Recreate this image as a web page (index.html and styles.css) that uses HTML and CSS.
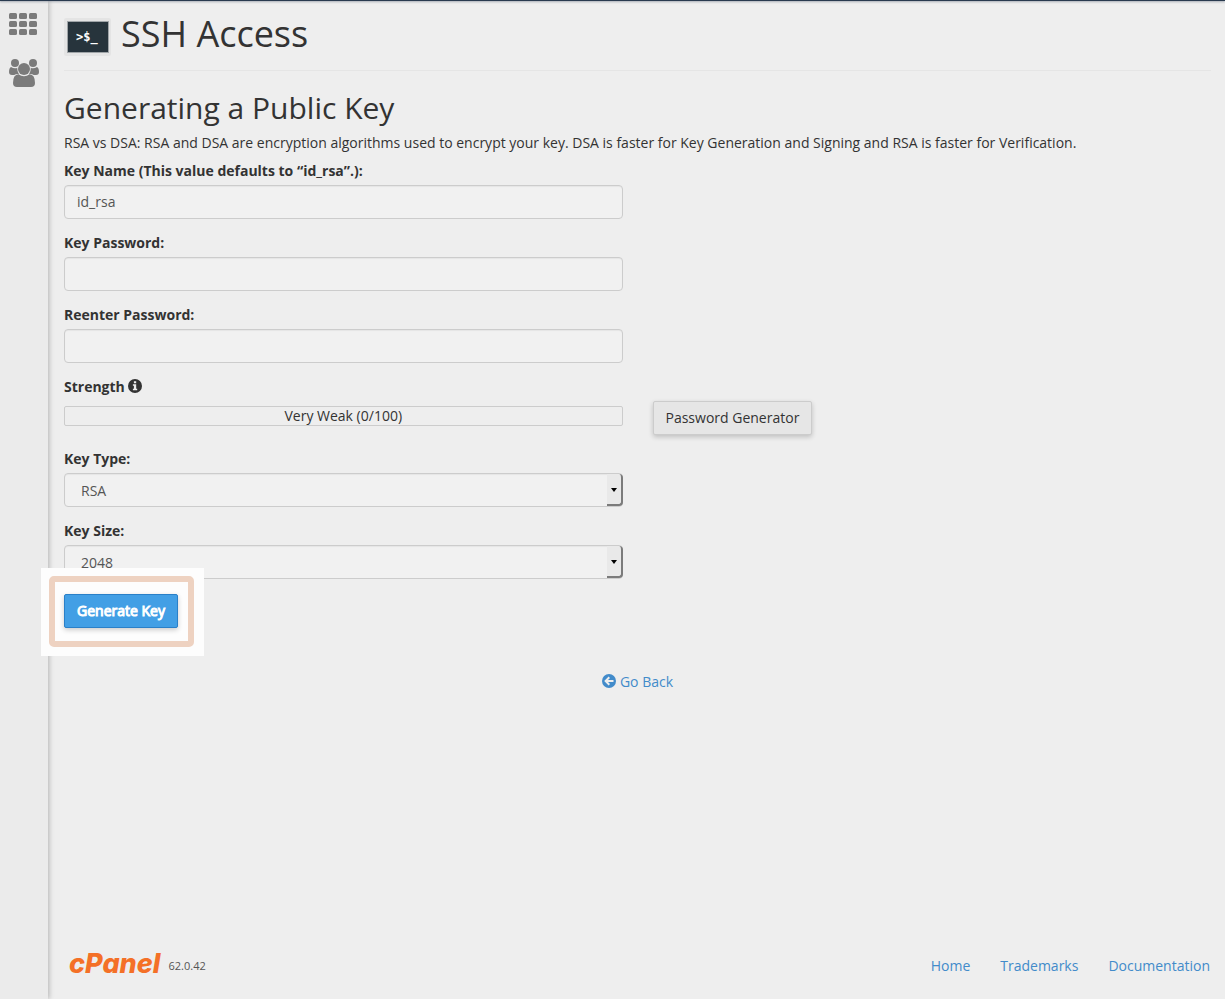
FILE: index.html
```html
<!DOCTYPE html>
<html lang="en">
<head>
<meta charset="utf-8">
<meta name="viewport" content="width=device-width, initial-scale=1">
<title>SSH Access</title>
<link rel="stylesheet" href="styles.css">
</head>
<body>
<div class="topbar"></div>
<div class="shell">
  <nav class="sidebar" aria-label="Main">
    <a class="side-link side-link-grid" href="#" aria-label="Home">
      <svg width="28" height="22" viewBox="0 0 28 22" fill="#7b7b7b">
        <rect x="0" y="0" width="8" height="6" rx="1.5"/><rect x="10" y="0" width="8" height="6" rx="1.5"/><rect x="20" y="0" width="8" height="6" rx="1.5"/>
        <rect x="0" y="8" width="8" height="6" rx="1.5"/><rect x="10" y="8" width="8" height="6" rx="1.5"/><rect x="20" y="8" width="8" height="6" rx="1.5"/>
        <rect x="0" y="16" width="8" height="6" rx="1.5"/><rect x="10" y="16" width="8" height="6" rx="1.5"/><rect x="20" y="16" width="8" height="6" rx="1.5"/>
      </svg>
    </a>
    <a class="side-link" href="#" aria-label="Users">
      <svg width="30" height="28" viewBox="0 0 30 28" fill="#7b7b7b">
        <circle cx="6" cy="4" r="4"/>
        <circle cx="24" cy="4" r="4"/>
        <path d="M2 8Q4 9.3 6 9.300Q7.500 9.300 8.200 8.800Q8 12.500 10 15.200Q7.500 14.300 5.300 16H3Q0 16 0 13Q0 9 2 8Z"/>
        <path d="M28 8Q26 9.300 24 9.300Q22.500 9.300 21.800 8.800Q22 12.500 20 15.200Q22.500 14.300 24.700 16H27Q30 16 30 13Q30 9 28 8Z"/>
        <circle cx="15" cy="10" r="6"/>
        <path d="M9.500 15.200Q12 17.200 15 17.200Q18 17.200 20.500 15.200Q26 15.500 26 24Q26 28 22 28H8Q4 28 4 24Q4 15.500 9.500 15.200Z"/>
      </svg>
    </a>
  </nav>
  <div class="page">
    <main class="content">
      <header class="page-header">
        <svg class="page-icon" width="47" height="38" viewBox="0 0 47 38" aria-hidden="true">
          <rect width="47" height="38" rx="2" fill="#e4e4e4"/>
          <rect x="3" y="3" width="42" height="32" fill="#a0a5a8"/>
          <rect x="4" y="4" width="40" height="30" fill="#27343c"/>
          <text x="12" y="23" class="prompt">&gt;$_</text>
        </svg>
        <h1>SSH Access</h1>
      </header>
      <h2>Generating a Public Key</h2>
      <p class="intro">RSA vs DSA: RSA and DSA are encryption algorithms used to encrypt your key. DSA is faster for Key Generation and Signing and RSA is faster for Verification.</p>
      <form class="key-form">
        <div class="field">
          <label for="key-name">Key Name (This value defaults to “id_rsa”.):</label>
          <input class="control" id="key-name" type="text" value="id_rsa">
        </div>
        <div class="field">
          <label for="key-pass">Key Password:</label>
          <input class="control" id="key-pass" type="password">
        </div>
        <div class="field">
          <label for="key-pass2">Reenter Password:</label>
          <input class="control" id="key-pass2" type="password">
        </div>
        <div class="field">
          <div class="strength-label" id="strength-label">Strength
            <svg class="text-icon" width="14" height="14" viewBox="0 0 14 14" aria-hidden="true"><circle cx="7" cy="7" r="7" fill="#333"/><path fill="#eee" d="M5.900 2.200H8.200V4.200H5.900ZM4.900 5.200H8.200V9.700H9.200V11.300H4.900V9.700H5.900V6.800H4.900Z"/></svg>
          </div>
        </div>
        <div class="generator-field">
          <div class="meter" role="status" aria-labelledby="strength-label">Very Weak (0/100)</div>
        </div>
        <button class="btn btn-default" type="button">Password Generator</button>
        <div class="field">
          <label for="key-type">Key Type:</label>
          <div class="select-wrap"><select class="control" id="key-type"><option>RSA</option><option>DSA</option></select><span class="arrow"></span></div>
        </div>
        <div class="field">
          <label for="key-size">Key Size:</label>
          <div class="select-wrap"><select class="control" id="key-size"><option>2048</option><option>4096</option></select><span class="arrow"></span></div>
        </div>
        <div class="spotlight"><button class="btn btn-primary" type="button">Generate Key</button></div>
      </form>
      <div class="back">
        <a href="#"><svg class="text-icon" width="14" height="14" viewBox="0 0 14 14" aria-hidden="true"><circle cx="7" cy="7" r="7" fill="#428bca"/><path fill="#eee" d="M2.200 7L6.600 2.600L8 4L6 6H11.500V8H6L8 10L6.600 11.400Z"/></svg>Go Back</a>
      </div>
    </main>
    <footer class="footer">
      <div class="brand"><span class="logo">cPanel</span><span class="version">62.0.42</span></div>
      <nav class="footer-links" aria-label="Footer"><a href="#">Home</a><a href="#">Trademarks</a><a href="#">Documentation</a></nav>
    </footer>
  </div>
</div>
</body>
</html>
```
FILE: styles.css
```css
* { box-sizing: border-box; }
body {
  margin: 0;
  min-height: 100vh;
  display: flex;
  flex-direction: column;
  background: #eee;
  color: #333;
  font: 14px/20px "Open Sans", sans-serif;
}
a { color: #428bca; text-decoration: none; }
svg { display: block; }
.topbar { height: 1px; background: #293a4f; box-shadow: 0 1px 2px rgba(41, 58, 79, .5); position: relative; }
.shell { flex: 1; display: flex; }
.sidebar {
  flex: none;
  width: 48px;
  padding: 12px 9px;
  background: #ebebeb;
  box-shadow: 1px 0 5px rgba(0, 0, 0, .25);
}
.side-link { display: block; }
.side-link-grid { margin-bottom: 24px; }
.page { flex: 1; display: flex; flex-direction: column; padding: 0 14px 0 16px; }
.content { flex: 1; }
.page-header {
  display: flex;
  height: 70px;
  gap: 10px;
  padding: 12px 0 14px;
  border-bottom: 1px solid #e5e5e5;
}
.page-icon { align-self: flex-end; }
.prompt { font: bold 12px "DejaVu Sans Mono", monospace; fill: #fff; }
h1, h2 { margin: 0; font-weight: 400; }
h1 { font-size: 36px; line-height: 42px; }
h2 { margin: 20px 0 8px; font-size: 30px; line-height: 34px; }
.intro { margin: 0 0 8px; }
.key-form {
  display: grid;
  grid-template-columns: repeat(2, minmax(0, 1fr));
  column-gap: 30px;
  justify-items: start;
}
.field { grid-column: 1; width: 100%; margin-bottom: 14px; }
.field label, .strength-label { display: block; margin-bottom: 4px; font-weight: 700; }
.strength-label { display: flex; align-items: center; gap: 3px; margin: 0 0 -10px; }
.text-icon { margin-bottom: 2px; }
.control {
  display: block;
  width: 100%;
  height: 34px;
  padding: 5px 12px 7px;
  border: 1px solid #ccc;
  border-radius: 4px;
  background: #f1f1f1;
  color: #555;
  font: inherit;
  box-shadow: inset 0 1px 1px rgba(0, 0, 0, .05);
}
.select-wrap { position: relative; }
select.control { appearance: none; padding: 7px 16px 5px; }
.arrow {
  position: absolute;
  top: 1px;
  right: 0;
  bottom: 1px;
  width: 16px;
  border: solid #7b7b7b;
  border-width: 0 2px 2px 0;
  border-radius: 0 4px 4px 0;
  background: #e9e9e9;
  pointer-events: none;
}
.arrow::after {
  content: "";
  position: absolute;
  top: 14px;
  left: 4px;
  border: solid transparent;
  border-width: 4px 3px 0;
  border-top-color: #000;
}
.generator-field { grid-column: 1; width: 100%; padding-top: 5px; }
.meter {
  height: 20px;
  border: 1px solid #ccc;
  border-radius: 2px;
  line-height: 18px;
  text-align: center;
}
.btn {
  height: 34px;
  padding: 0 12px;
  border: 1px solid #ccc;
  border-radius: 2px;
  color: #333;
  font: inherit;
  box-shadow: 0 2px 5px rgba(0, 0, 0, .2);
}
.btn-default { background: #e6e6e6; margin-bottom: 14px; }
.spotlight { grid-column: 1; position: relative; margin-top: 1px; }
.spotlight::before {
  content: "";
  position: absolute;
  inset: -26px -26px -28px -23px;
  background: #fdfdfd;
}
.spotlight::after {
  content: "";
  position: absolute;
  inset: -18px -16px -19px -15px;
  border: 6px solid #eed2c1;
  border-radius: 5px;
  pointer-events: none;
}
.btn-primary {
  display: block;
  position: relative;
  border-color: #2a80c8;
  background: #429fe5;
  color: #fff;
  -webkit-text-stroke: 1px #fff;
}
.back { margin-top: 44px; text-align: center; }
.back a { display: inline-flex; align-items: center; gap: 4px; }
.footer { display: flex; justify-content: space-between; align-items: center; padding: 0 1px 18px 0; }
.brand { display: flex; align-items: center; gap: 8px; padding-left: 5px; }
.logo { padding-bottom: 4px; color: #f47027; font: italic 800 27px/26px Inter, sans-serif; }
.version { color: #555; font-size: 11px; }
.footer-links { display: flex; gap: 30px; }
```
